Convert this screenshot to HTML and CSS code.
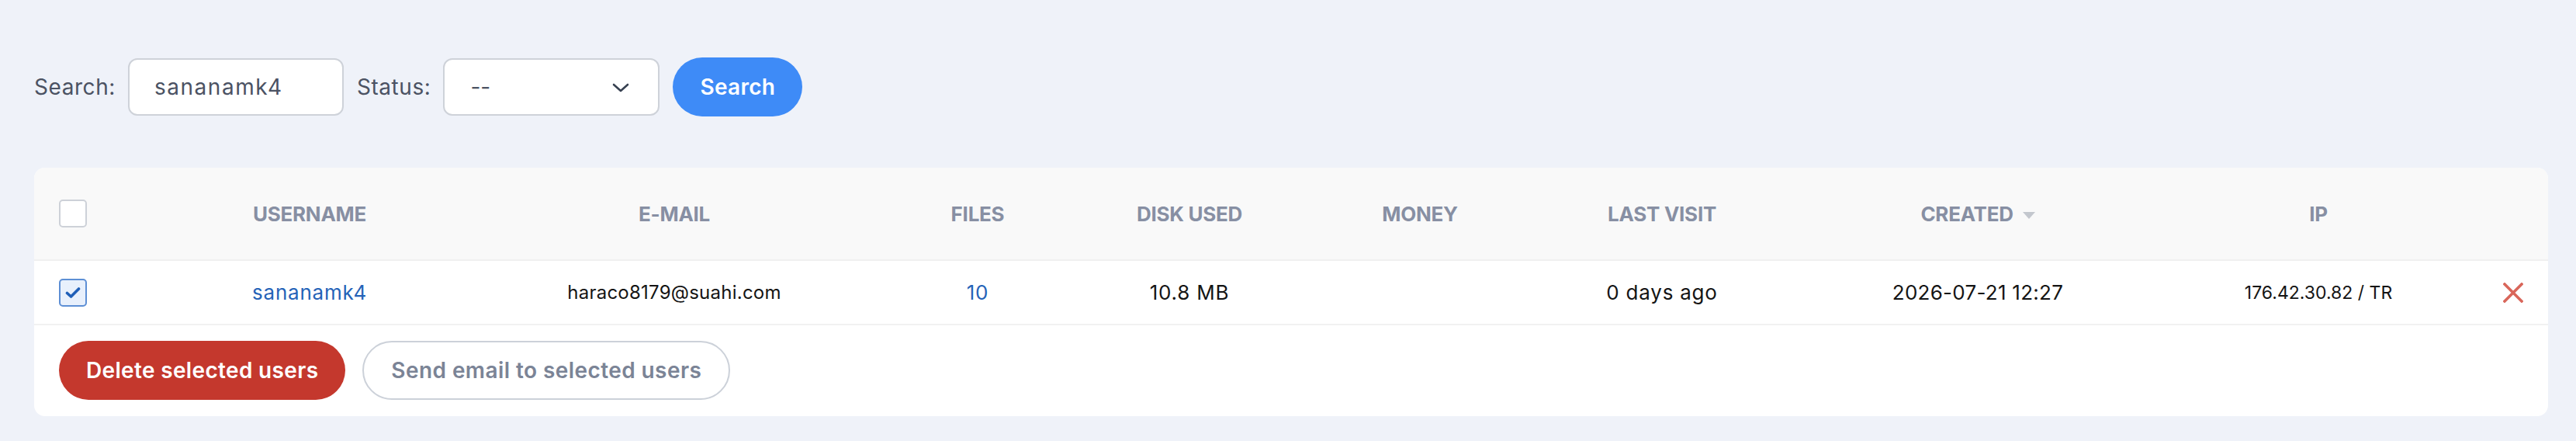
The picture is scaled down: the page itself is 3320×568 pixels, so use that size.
FILE: index.html
```html
<!DOCTYPE html>
<html lang="en">
<head>
<meta charset="utf-8">
<title>Users</title>
<link rel="stylesheet" href="styles.css">
</head>
<body>
<div class="page">
  <form class="filters">
    <label class="flabel" for="q">Search:</label>
    <input class="finput" id="q" type="text" value="sananamk4">
    <label class="flabel" for="st">Status:</label>
    <div class="select-wrap">
      <select class="fselect" id="st"><option>--</option></select>
      <svg class="chev" width="22" height="12" viewBox="0 0 22 12"><path d="M2 2 L11 10 L20 2" fill="none" stroke="#374151" stroke-width="2.6" stroke-linecap="round" stroke-linejoin="round"/></svg>
    </div>
    <button class="btn btn-primary" type="button">Search</button>
  </form>

  <div class="card">
    <table class="users">
      <colgroup>
        <col class="c-check"><col class="c-user"><col class="c-email"><col class="c-files"><col class="c-disk"><col class="c-money"><col class="c-visit"><col class="c-created"><col class="c-ip"><col class="c-del">
      </colgroup>
      <thead>
        <tr>
          <th class="cell-check"><span class="box"></span></th>
          <th>Username</th>
          <th>E-mail</th>
          <th>Files</th>
          <th>Disk used</th>
          <th>Money</th>
          <th>Last visit</th>
          <th>Created <span class="sort"></span></th>
          <th>IP</th>
          <th></th>
        </tr>
      </thead>
      <tbody>
        <tr>
          <td class="cell-check"><span class="box box-on"><svg width="20" height="16" viewBox="0 0 20 16"><path d="M2.5 8.5 L7.5 13 L17.5 3" fill="none" stroke="#1f5fb8" stroke-width="3.6" stroke-linecap="round" stroke-linejoin="round"/></svg></span></td>
          <td><a class="link" href="#">sananamk4</a></td>
          <td class="t-email">haraco8179@suahi.com</td>
          <td><a class="link" href="#">10</a></td>
          <td>10.8 MB</td>
          <td></td>
          <td>0 days ago</td>
          <td class="t-date">2026-07-21 12:27</td>
          <td class="t-ip">176.42.30.82 / TR</td>
          <td><svg class="del" width="26" height="26" viewBox="0 0 26 26"><path d="M2 2 L24 24 M24 2 L2 24" stroke="#d9665a" stroke-width="3.6" stroke-linecap="square"/></svg></td>
        </tr>
      </tbody>
    </table>
    <div class="actions">
      <button class="btn btn-danger" type="button">Delete selected users</button>
      <button class="btn btn-outline" type="button">Send email to selected users</button>
    </div>
  </div>
</div>
</body>
</html>
```

FILE: styles.css
```css
html, body {
  margin: 0;
  padding: 0;
  background: #eff2f9;
}
body {
  font-family: "Inter", "DejaVu Sans", sans-serif;
  color: #1a1a1a;
}
.page {
  padding: 74px 36px 20px 44px;
}
.filters {
  display: flex;
  align-items: center;
  height: 76px;
}
.flabel {
  font-size: 28px;
  color: #4b5263;
  letter-spacing: 0.02em;
  margin-right: 16px;
}
.finput {
  box-sizing: border-box;
  width: 278px;
  height: 74px;
  border: 2px solid #ced2d9;
  border-radius: 12px;
  background: #fff;
  padding: 0 0 0 32px;
  font-family: inherit;
  font-size: 28px;
  letter-spacing: 0.055em;
  color: #4b5263;
  margin-right: 17px;
  outline: none;
}
.select-wrap {
  position: relative;
  width: 279px;
  height: 74px;
  margin-right: 17px;
}
.fselect {
  appearance: none;
  -webkit-appearance: none;
  box-sizing: border-box;
  width: 100%;
  height: 100%;
  border: 2px solid #ced2d9;
  border-radius: 12px;
  background: #fff;
  padding: 0 0 0 33px;
  font-family: inherit;
  font-size: 28px;
  color: #4b5263;
  outline: none;
}
.chev {
  position: absolute;
  right: 39px;
  top: 32px;
  pointer-events: none;
}
.btn {
  box-sizing: border-box;
  height: 76px;
  border-radius: 38px;
  border: 0;
  font-family: inherit;
  font-size: 28px;
  font-weight: 600;
  letter-spacing: 0.01em;
  padding: 0 35px;
  cursor: pointer;
}
.btn-primary {
  width: 167px;
  background: #3e8bf7;
  color: #fff;
}
.card {
  margin-top: 66px;
  background: #fff;
  border-radius: 14px;
  overflow: hidden;
}
.users {
  width: 100%;
  table-layout: fixed;
  border-collapse: collapse;
}
.c-check { width: 162px; }
.c-user { width: 386px; }
.c-email { width: 554px; }
.c-files { width: 228px; }
.c-disk { width: 318px; }
.c-money { width: 276px; }
.c-visit { width: 348px; }
.c-created { width: 466px; }
.c-ip { width: 412px; }
.c-del { width: 90px; }
.users th {
  height: 118px;
  padding: 0;
  background: #f9f9f9;
  border-bottom: 2px solid #f0f0f0;
  font-size: 26px;
  font-weight: 700;
  letter-spacing: -0.01em;
  text-transform: uppercase;
  color: #878fa3;
  text-align: center;
  vertical-align: middle;
}
.users td {
  height: 81px;
  padding: 0;
  border-bottom: 2px solid #f1f1f1;
  font-size: 26px;
  letter-spacing: 0.03em;
  color: #141414;
  text-align: center;
  vertical-align: middle;
}
.users .cell-check {
  text-align: left;
  padding-left: 32px;
}
.box {
  box-sizing: border-box;
  display: flex;
  align-items: center;
  justify-content: center;
  width: 36px;
  height: 36px;
  border: 2px solid #cdd1d8;
  border-radius: 5px;
  background: #fff;
}
.box-on {
  background: #e8f0fc;
  border-color: #5d8fd5;
}
.sort {
  display: inline-block;
  width: 0;
  height: 0;
  border-left: 8px solid transparent;
  border-right: 8px solid transparent;
  border-top: 9px solid #c3c7ce;
  vertical-align: middle;
  margin-left: 6px;
}
.link {
  color: #2563b8;
  text-decoration: none;
}
.users .t-email { font-size: 24px; letter-spacing: 0.01em; }
.users .t-date { letter-spacing: 0.01em; }
.users .t-ip { font-size: 23px; letter-spacing: 0; }
.del { display: block; margin: 0 auto; }
.actions {
  display: flex;
  gap: 22px;
  padding: 20px 32px 21px;
}
.btn-danger {
  background: #c4382d;
  color: #fff;
  letter-spacing: 0.012em;
}
.btn-outline {
  background: #fff;
  color: #7b8496;
  border: 2px solid #ccd1d9;
  letter-spacing: 0.015em;
}
```
